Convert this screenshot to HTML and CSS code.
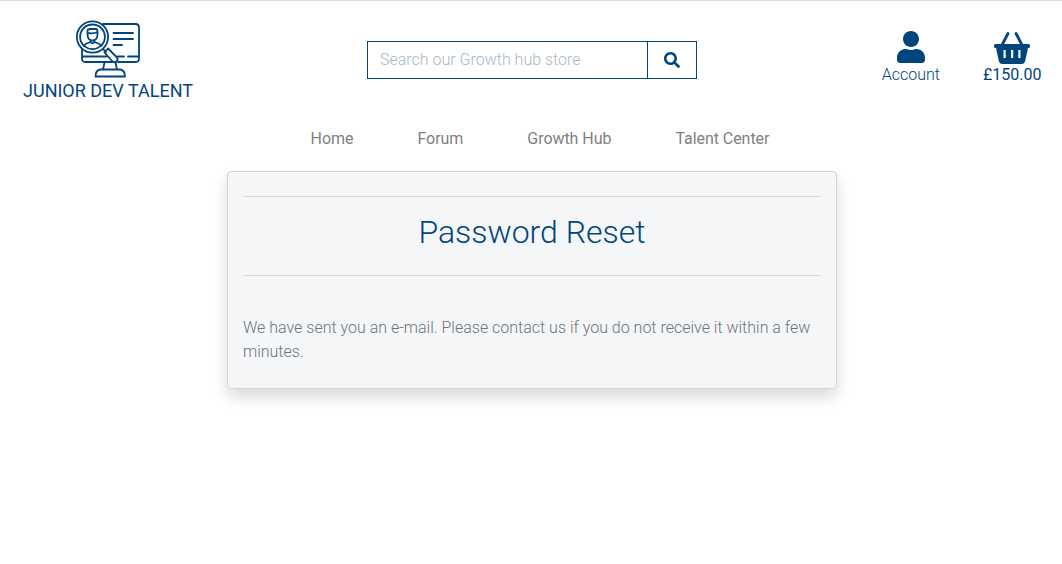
FILE: index.html
```html
<!DOCTYPE html>
<html lang="en">
<head>
<meta charset="utf-8">
<title>Junior Dev Talent</title>
<link rel="stylesheet" href="styles.css">
</head>
<body>
<header class="header">
  <a class="brand">
    <svg class="brand-logo" viewBox="0 0 64 58" fill="none" stroke="currentColor" stroke-width="1.8" stroke-linecap="round" stroke-linejoin="round">
      <path d="M27 4H59.500Q63 4 63 7.500V38.500Q63 42 59.500 42H42M36 42H9.500Q6 42 6 38.500V30M6 36.500H31M41.500 36.500H48M52 36.500H63"/>
      <path d="M37.500 13H57M37.500 19H57M37.500 25H46"/>
      <circle cx="16.500" cy="17" r="15.600"/>
      <path d="M7.400 25.300A12.400 12.400 0 1 1 25.600 25.300M8 25.900Q16.500 32.500 25 25.900"/>
      <path d="M11.500 11Q11.500 9 14 9H20Q21.500 9 21.500 12V15Q21 20.500 16.500 20.500T11.500 15ZM11.500 13Q17 14 21.500 12M14.500 20V22L9.500 24L8 26M18.500 20V22L23.500 24L25 26M14.500 22Q16.500 24.500 18.500 22"/>
      <path d="M27.500 29.500L30 32M28.500 32.500L32 28.500L41 37.500Q42.500 40 40.500 41.500Q38.500 43 36.500 41.500L28.500 32.500"/>
      <path d="M28.500 42.500L27 49.500M39.500 42.500L41 49.500M24 49.500H44.500Q49 50.500 49 56.500H19.500Q19.500 50.500 24 49.500Z"/>
    </svg>
    <span class="brand-name">JUNIOR DEV TALENT</span>
  </a>
  <form class="search">
    <input class="search-input" type="text" placeholder="Search our Growth hub store">
    <button class="search-button" type="button" aria-label="Search">
      <svg class="search-icon" viewBox="0 0 512 512" fill="currentColor"><path d="M505 442.700L405.300 343c-4.500-4.500-10.600-7-17-7H372c27.600-35.300 44-79.700 44-128C416 93.100 322.900 0 208 0S0 93.100 0 208s93.100 208 208 208c48.300 0 92.700-16.400 128-44v16.300c0 6.400 2.500 12.500 7 17l99.700 99.700c9.400 9.400 24.600 9.400 33.900 0l28.300-28.300c9.400-9.400 9.400-24.600.1-34zM208 336c-70.700 0-128-57.200-128-128 0-70.700 57.200-128 128-128 70.700 0 128 57.200 128 128 0 70.700-57.200 128-128 128z"/></svg>
    </button>
  </form>
  <div class="actions">
    <a class="action">
      <svg class="user-icon" viewBox="0 0 448 512" fill="currentColor"><path d="M224 256c70.700 0 128-57.300 128-128S294.700 0 224 0 96 57.300 96 128s57.300 128 128 128zm89.600 32h-16.700c-22.200 10.200-46.900 16-72.900 16s-50.600-5.800-72.900-16h-16.700C60.200 288 0 348.200 0 422.400V464c0 26.500 21.500 48 48 48h352c26.500 0 48-21.500 48-48v-41.600c0-74.200-60.200-134.400-134.400-134.400z"/></svg>
      <span>Account</span>
    </a>
    <a class="action action-basket">
      <svg class="basket-icon" viewBox="0 0 36 32">
        <path d="M14 2.500L8 14M22 2.500L28 14" fill="none" stroke="currentColor" stroke-width="2.800" stroke-linecap="round"/>
        <path fill="currentColor" fill-rule="evenodd" d="M1.500 13H34.500Q36 13 36 14.500V15.500Q36 17 34.500 17H34L31.300 29.500Q30.600 33 27.500 33H8.500Q5.400 33 4.700 29.500L2 17H1.500Q0 17 0 15.500V14.500Q0 13 1.500 13ZM9.500 19V27H11.700V19ZM17 19V27H19.200V19ZM24.300 19V27H26.500V19Z"/>
      </svg>
      <span>£150.00</span>
    </a>
  </div>
</header>
<nav class="nav">
  <a>Home</a>
  <a>Forum</a>
  <a>Growth Hub</a>
  <a>Talent Center</a>
</nav>
<main class="card">
  <hr class="rule">
  <h2 class="title">Password Reset</h2>
  <hr class="rule">
  <p class="message">We have sent you an e-mail. Please contact us if you do not receive it within a few minutes.</p>
</main>
</body>
</html>
```

FILE: styles.css
```css
* { box-sizing: border-box; }

body {
  margin: 0;
  min-height: 100vh;
  border-top: 1px solid #dcdcdc;
  background: #fff;
  color: #6c757d;
  font: 300 16px/24px Roboto, sans-serif;
}

.header {
  display: grid;
  grid-template-columns: 216px 1fr 214px;
  height: 126px;
  color: #00457c;
}

.brand {
  display: flex;
  flex-direction: column;
  align-items: center;
  padding-top: 19px;
}

.brand-logo { width: 64px; height: 58px; }
.brand-name { margin-top: 1px; font-size: 18px; font-weight: 400; white-space: nowrap; }

.search {
  display: flex;
  justify-self: center;
  width: 330px;
  height: 38px;
  margin-top: 40px;
  border: 1px solid #00457c;
}

.search-input {
  flex: 1;
  min-width: 0;
  padding: 0 12px;
  border: 0;
  background: transparent;
  font: inherit;
}

.search-input::placeholder { color: #aab7c4; opacity: 1; }

.search-button {
  display: flex;
  align-items: center;
  justify-content: center;
  width: 49px;
  padding: 0;
  border: 0;
  border-left: 1px solid #00457c;
  background: transparent;
  color: #00457c;
}

.search-icon { width: 16px; height: 16px; }

.actions {
  display: flex;
  justify-content: flex-end;
  gap: 43px;
  padding: 30px 20.5px 0 0;
}

.action { display: flex; flex-direction: column; align-items: center; }
.action-basket { font-weight: 400; }
.user-icon { width: 28px; height: 32px; }
.basket-icon { width: 36px; height: 32px; overflow: visible; }

.nav {
  display: flex;
  justify-content: center;
  gap: 64px;
  padding-left: 18px;
  color: #808080;
  font-weight: 400;
  letter-spacing: -.05px;
}

.card {
  width: 610px;
  height: 218px;
  margin: 20px 0 0 227px;
  padding: 24px 15px;
  border: 1px solid #d3d6d9;
  border-radius: 4px;
  background: #f4f6f8;
  box-shadow: 0 8px 16px rgba(0, 0, 0, .15);
}

.rule { margin: 0; border: 0; border-top: 1px solid #d9dbdd; }

.title {
  margin: 16px 0 24px;
  color: #00457c;
  font-size: 32px;
  font-weight: 300;
  line-height: 38px;
  text-align: center;
}

.message { margin: 40px 0 0; }
```
